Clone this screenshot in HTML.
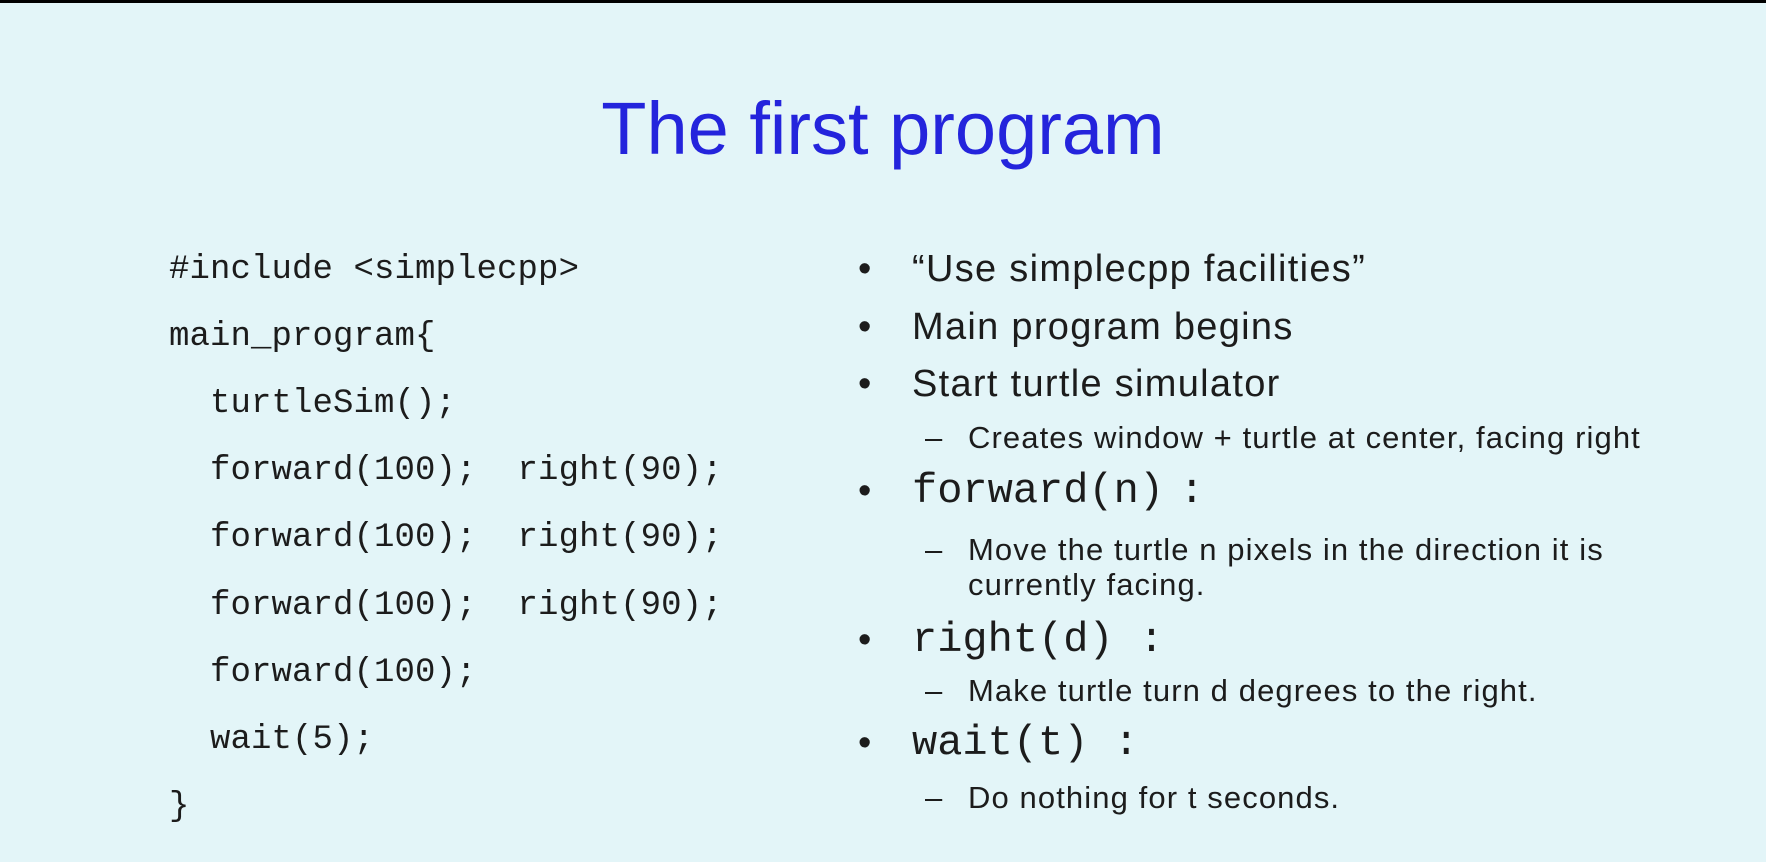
<!DOCTYPE html>
<html><head><meta charset="utf-8"><style>
html,body{margin:0;padding:0}
body{width:1766px;height:862px;background:#e3f5f8;position:relative;overflow:hidden;color:#1c1c1c}
.top{position:absolute;left:0;top:0;width:1766px;height:3px;background:#000}
.t{position:absolute;white-space:pre;line-height:1}
.title{font-family:"Liberation Sans",sans-serif;font-size:74px;color:#2424dc;left:0;width:1766px;text-align:center;top:92px;letter-spacing:0px}
.code{font-family:"Liberation Mono",monospace;font-size:34px;letter-spacing:0.1px}
.b{font-family:"Liberation Sans",sans-serif;font-size:38px;letter-spacing:1.3px}
.s{font-family:"Liberation Sans",sans-serif;font-size:31px;letter-spacing:1.1px}
.m{font-family:"Liberation Mono",monospace;font-size:42px}
</style></head><body>
<div class="top"></div>
<div class="t title">The first program</div>

<div class="t code" style="left:169px;top:253px">#include &lt;simplecpp&gt;</div>
<div class="t code" style="left:169px;top:320px">main_program{</div>
<div class="t code" style="left:169px;top:387px">  turtleSim();</div>
<div class="t code" style="left:169px;top:454px">  forward(100);  right(90);</div>
<div class="t code" style="left:169px;top:521px">  forward(100);  right(90);</div>
<div class="t code" style="left:169px;top:589px">  forward(100);  right(90);</div>
<div class="t code" style="left:169px;top:656px">  forward(100);</div>
<div class="t code" style="left:169px;top:723px">  wait(5);</div>
<div class="t code" style="left:169px;top:790px">}</div>

<div class="t b" style="left:858px;top:250px">•</div>
<div class="t b" style="left:912px;top:250px">“Use simplecpp facilities”</div>
<div class="t b" style="left:858px;top:308px">•</div>
<div class="t b" style="left:912px;top:308px">Main program begins</div>
<div class="t b" style="left:858px;top:365px">•</div>
<div class="t b" style="left:912px;top:365px">Start turtle simulator</div>
<div class="t s" style="left:925px;top:422px">–</div>
<div class="t s" style="left:968px;top:422px">Creates window + turtle at center, facing right</div>
<div class="t b" style="left:858px;top:472px">•</div>
<div class="t m" style="left:912px;top:470px">forward(n)<span style="letter-spacing:-10px"> </span>:</div>
<div class="t s" style="left:925px;top:534px">–</div>
<div class="t s" style="left:968px;top:534px">Move the turtle n pixels in the direction it is</div>
<div class="t s" style="left:968px;top:569px">currently facing.</div>
<div class="t b" style="left:858px;top:621px">•</div>
<div class="t m" style="left:912px;top:619px">right(d) :</div>
<div class="t s" style="left:925px;top:675px">–</div>
<div class="t s" style="left:968px;top:675px">Make turtle turn d degrees to the right.</div>
<div class="t b" style="left:858px;top:724px">•</div>
<div class="t m" style="left:912px;top:722px">wait(t) :</div>
<div class="t s" style="left:925px;top:782px">–</div>
<div class="t s" style="left:968px;top:782px">Do nothing for t seconds.</div>
</body></html>
